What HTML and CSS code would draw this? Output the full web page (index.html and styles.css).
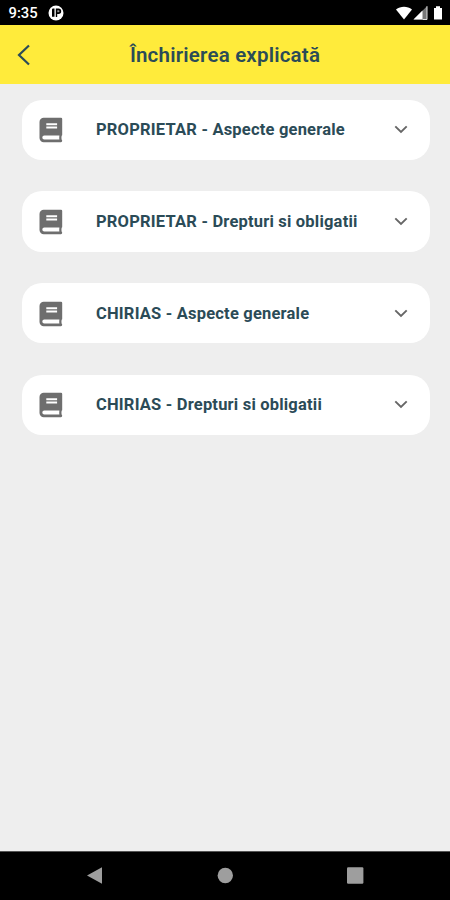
FILE: index.html
```html
<!DOCTYPE html>
<html lang="ro">
<head>
<meta charset="utf-8">
<meta name="viewport" content="width=device-width, initial-scale=1">
<title>Închirierea explicată</title>
<link rel="stylesheet" href="styles.css">
</head>
<body>
<svg class="defs" width="0" height="0" aria-hidden="true">
  <symbol id="book" viewBox="0 0 24 26">
    <path fill-rule="evenodd" d="M4.700 .8H22a1.200 1.200 0 0 1 1.200 1.200V17.700c0 .5-.2.900-.6 1.100-.2 1.200-.2 2.600 0 3.800.9.500.9 2.700-.6 2.700H4.700A4.200 4.200 0 0 1 .5 21.100V5A4.200 4.200 0 0 1 4.700 .8ZM7.300 6.300v2h10.800v-2ZM7.300 9.500v2h10.800v-2ZM5.300 18.500a2 2 0 0 0 0 4H20.400q-.3-2 0-4Z"/>
  </symbol>
  <symbol id="chevron" viewBox="0 0 14 9">
    <path d="M1.300 1.400 7 7l5.700-5.600" fill="none" stroke="currentColor" stroke-width="1.900"/>
  </symbol>
</svg>
<div class="screen">
  <div class="status">
    <span class="time">9:35</span>
    <svg class="app-icon" viewBox="0 0 16 16"><circle cx="8" cy="8" r="7.500" fill="#fff"/><path d="M4 4.500Q4 3.500 5 3.500H6.500V11.800H4ZM7.800 3.500H10.500a2.700 2.700 0 0 1 0 5.400H9.200V12H7.800Z" fill="#000"/><path d="M9.300 5.300h1.200a1 1 0 0 1 0 2H9.300Z" fill="#999"/></svg>
    <svg class="signals" viewBox="0 0 48 16">
      <path d="M0 4.500C4.500 .7 11.500 .7 16 4.500L8 14.500Z" fill="#fff"/>
      <path d="M31 1.200V14.500H17.500Z" fill="#777"/><path d="M26.500 5.600V14.500H17.500Z" fill="#fff"/><path d="M31 1.200V14.500H26.500" fill="none" stroke="#ddd"/>
      <path d="M38 3h2V1.200h4V3h2v11.500h-8Z" fill="#fff"/>
    </svg>
  </div>
  <header class="header">
    <svg class="back" viewBox="0 0 14 22"><path d="M12 1.500 2 11l10 9.500" fill="none" stroke="currentColor" stroke-width="2.200"/></svg>
    <h1>Închirierea explicată</h1>
  </header>
  <main class="list">
    <div class="card"><svg class="book"><use href="#book"/></svg><span class="label">PROPRIETAR - Aspecte generale</span><svg class="chevron"><use href="#chevron"/></svg></div>
    <div class="card"><svg class="book"><use href="#book"/></svg><span class="label">PROPRIETAR - Drepturi si obligatii</span><svg class="chevron"><use href="#chevron"/></svg></div>
    <div class="card"><svg class="book"><use href="#book"/></svg><span class="label">CHIRIAS - Aspecte generale</span><svg class="chevron"><use href="#chevron"/></svg></div>
    <div class="card"><svg class="book"><use href="#book"/></svg><span class="label">CHIRIAS - Drepturi si obligatii</span><svg class="chevron"><use href="#chevron"/></svg></div>
  </main>
  <nav class="nav">
    <svg viewBox="0 0 18 18"><path d="M1 8.500 16 .2V16.800Z"/></svg>
    <svg viewBox="0 0 18 18"><circle cx="9.300" cy="8.500" r="7.700"/></svg>
    <svg viewBox="0 0 18 18"><rect x="1" y=".3" width="16.400" height="16.400" rx="1.200"/></svg>
  </nav>
</div>
</body>
</html>
```
FILE: styles.css
```css
* {
  box-sizing: border-box;
}

body {
  margin: 0;
  font-family: Roboto, sans-serif;
  color: #2b4b57;
}

.defs {
  display: block;
}

.screen {
  display: flex;
  flex-direction: column;
  height: 900px;
  width: 450px;
  background: #eee;
}

.status {
  display: flex;
  align-items: center;
  height: 25px;
  padding: 1px 6px 0 8.500px;
  background: #000;
  color: #fff;
}

.time {
  width: 39.500px;
  font-size: 14.800px;
  font-weight: 500;
}

.app-icon {
  width: 16px;
  height: 16px;
}

.signals {
  width: 48px;
  height: 16px;
  margin-left: auto;
}

.header {
  display: grid;
  grid-template-columns: 14px 1fr 14px;
  align-items: center;
  height: 58.500px;
  padding: 1px 17px 0;
  background: #ffeb3b;
}

.back {
  width: 14px;
  height: 22px;
}

h1 {
  margin: 0;
  padding-top: 1px;
  text-align: center;
  font-size: 20.500px;
  font-weight: 600;
  line-height: 24px;
  letter-spacing: .2px;
}

.list {
  flex: 1;
  display: flex;
  flex-direction: column;
  gap: 31.100px;
  padding: 16px 20px 0 21.500px;
}

.card {
  display: flex;
  align-items: center;
  height: 60.600px;
  padding: 0 22.500px 0 17px;
  border-radius: 20px;
  background: #fff;
}

.book {
  width: 24px;
  height: 26px;
  margin: 1px 33.500px 0 0;
  fill: #6e6e6e;
}

.label {
  flex: 1;
  white-space: nowrap;
  font-size: 16.500px;
  font-weight: 700;
  letter-spacing: .2px;
}

.chevron {
  width: 14px;
  height: 9px;
  color: #666;
}

.nav {
  display: flex;
  align-items: center;
  justify-content: space-between;
  height: 49.500px;
  padding: 0 86px;
  border-top: 1px solid #555;
  background: #000;
}

.nav svg {
  width: 18px;
  height: 18px;
  fill: #9e9e9e;
}
```
